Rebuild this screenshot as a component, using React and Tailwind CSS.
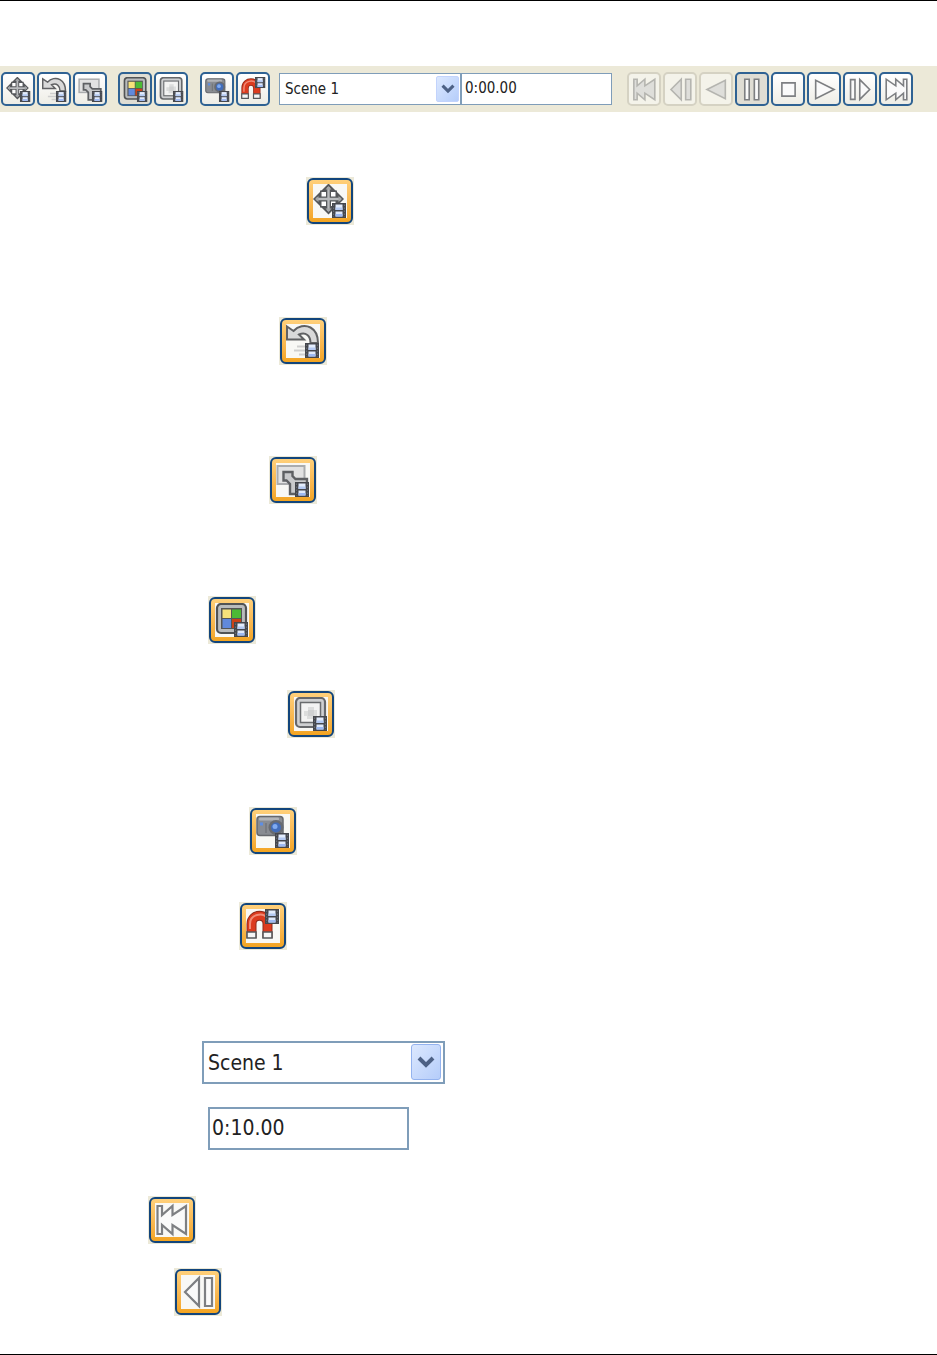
import { useState } from 'react';
import clsx from 'clsx';

const Film = ({ x = 19, y = 19 }) => (
  <g transform={`translate(${x} ${y})`}>
    <rect width="14" height="15" fill="#45474d" />
    <path d="M1.6 1.5 V14 M12.4 1.5 V14" stroke="#6d7077" strokeWidth="1" strokeDasharray="1.5 1.5" />
    <rect x="3.5" y="1.5" width="7" height="5.5" fill="#e3ecfc" />
    <rect x="3.5" y="4.5" width="7" height="2.5" fill="#b4c9f2" />
    <rect x="3.5" y="8.5" width="7" height="5" fill="#dfe9fb" />
    <rect x="3.5" y="11" width="7" height="2.5" fill="#9db9f3" />
  </g>
);

const MoveIcon = () => (
  <>
    <path d="M15.5 -.5 L31 15 L15.5 30.5 L0 15Z" fill="#55575a" />
    <path d="M7 6.5 H24 V23.5 H7Z" fill="#55575a" />
    <path d="M15.5 3 V27 M3 15 H28" stroke="#b9bbbd" strokeWidth="2.4" />
    <path d="M15.5 2 L18.5 5.5 H12.5Z M15.5 28 L18.5 24.5 H12.5Z M2 15 L5.5 12 V18Z M29 15 L25.5 12 V18Z" fill="#a4a6a8" />
    <path d="M8.5 8 H13 V12.5 H8.5Z M18 8 H22.5 V12.5 H18Z M8.5 17.5 H13 V22 H8.5Z M18 17.5 H22.5 V22 H18Z" fill="#fff" />
    <Film />
  </>
);

const UndoIcon = () => (
  <>
    <path
      d="M1 2.5 L7.5 7 C12 2 19 .5 24.5 3.5 C30 6.5 32 12.5 32 19 H24.5 C24.5 12 20 7.5 13 10.5 L18 15.5 H1Z"
      fill="#d9d9d9"
      stroke="#606163"
      strokeWidth="2"
    />
    <path d="M11 22.5 H19 M8 26.5 H19 M13 30.5 H19" stroke="#cfcfcf" strokeWidth="2" />
    <Film />
  </>
);

const ResizeIcon = () => (
  <>
    <rect x="1.5" y="3" width="27" height="18" fill="#e2e2e2" stroke="#aaacae" strokeWidth="2" />
    <path
      d="M7.5 9 H16.5 V13 L19.5 16 H31 V31 H14 V21 L10.5 17.5 H7.5Z"
      fill="#c9cacc"
      stroke="#5e6063"
      strokeWidth="2.4"
    />
    <Film />
  </>
);

const ColorsIcon = () => (
  <>
    <rect x="2" y="1" width="29" height="29" rx="4" fill="#b9bbbd" stroke="#515355" strokeWidth="2.2" />
    <rect x="6" y="5" width="21" height="21" fill="#555" />
    <rect x="7.5" y="6.5" width="8.5" height="8.5" fill="#f7e27a" />
    <rect x="17" y="6.5" width="9" height="8.5" fill="#4dba35" />
    <rect x="7.5" y="16" width="8.5" height="9" fill="#6189dc" />
    <rect x="17" y="16" width="9" height="9" fill="#cc4218" />
    <Film />
  </>
);

const FrameIcon = () => (
  <>
    <rect x="2" y="1" width="29" height="29" rx="4" fill="#cfd0d2" stroke="#66686b" strokeWidth="2.2" />
    <rect x="6.5" y="5.5" width="20" height="20" fill="#f3f3f3" stroke="#696b6e" strokeWidth="1.5" />
    <path d="M14 10 H20 V13 H23 V19 H20 V22 H13 V19 H10 V14 H14Z" fill="#dcdddd" />
    <path d="M14 13 H20 V19 H14Z" fill="#cfd0d1" />
    <Film />
  </>
);

const CameraIcon = () => (
  <>
    <rect x="1" y="2.5" width="26" height="19" rx="3" fill="#898c92" stroke="#66686d" strokeWidth="1.5" />
    <rect x="3" y="3.5" width="20" height="3" rx="1" fill="#b2b4b8" />
    <rect x="4" y="8.5" width="3" height="3" fill="#5d8ee4" />
    <path d="M10 9 V19" stroke="#73767b" strokeWidth="1.5" />
    <circle cx="20" cy="13.5" r="7.5" fill="#686b71" />
    <circle cx="20" cy="13.5" r="5" fill="#426dba" />
    <circle cx="19" cy="12.5" r="2.5" fill="#80abf0" />
    <Film />
  </>
);

const MagnetIcon = () => (
  <>
    <path d="M5.5 29 V15 C5.5 4 21.5 4 21.5 15 V29" fill="none" stroke="#8e2b1b" strokeWidth="10" />
    <path d="M5.5 23 V15 C5.5 4 21.5 4 21.5 15 V23" fill="none" stroke="#dc3b1e" strokeWidth="8" />
    <path d="M4 20 V15 C4 5 17 3 21 9" fill="none" stroke="#f18b76" strokeWidth="2" />
    <path d="M1 23 H10 V29 H1Z M17 23 H26 V29 H17Z" fill="#f5f5f5" stroke="#56585b" strokeWidth="1.6" />
    <Film y={0} />
  </>
);

// outlines of the transport buttons
const SHAPES = {
  first: 'M2.5 3 H7 V12 L17.5 3 V12 L31 3 V31 L17.5 22 V31 L7 22 V31 H2.5Z',
  stepBack: 'M4 17 L18 3 V31Z M24 3 H31 V31 H24Z',
  back: 'M4 17 L29 4.5 V29.5Z',
  pause: 'M6.5 3 H12.5 V31 H6.5Z M19.5 3 H25.5 V31 H19.5Z',
  stop: 'M8 8 H26 V26 H8Z',
  play: 'M30 17 L5 4.5 V29.5Z',
  stepForward: 'M3.5 3.5 H9.5 V30.5 H3.5Z M29.5 17 L16 3.5 V30.5Z',
  last: 'M31 3 H26.5 V12 L16 3 V12 L3 3 V31 L16 22 V31 L26.5 22 V31 H31Z',
};

const Transport = ({ shape, disabled }) => (
  <path
    d={SHAPES[shape]}
    fill={disabled ? '#dededa' : '#fafafa'}
    stroke={disabled ? '#b5b5b0' : '#7d7f82'}
    strokeWidth="2.2"
  />
);

const Icon = ({ large, children }) => (
  <svg viewBox="0 0 34 34" className={large ? 'size-[34px]' : 'size-[25px]'} aria-hidden="true">
    {children}
  </svg>
);

const ToolButton = ({ label, pressed, disabled, children }) => (
  <button
    type="button"
    aria-label={label}
    disabled={disabled}
    className={clsx(
      'flex size-[34px] shrink-0 items-center justify-center rounded-[5px] border-2',
      disabled && 'border-[#d5d2c3] bg-[#f4f3ea]',
      !disabled && 'border-[#2f6293]',
      !disabled && (pressed ? 'bg-[#dfddd4]' : 'bg-linear-to-b from-white to-[#eeede6]')
    )}
  >
    <Icon>{children}</Icon>
  </button>
);

const HotButton = ({ label, children }) => (
  <span className="flex size-12 items-center justify-center bg-[#ece9d8]">
    <button
      type="button"
      aria-label={label}
      className="flex size-[46px] items-center justify-center rounded-md border-2 border-[#12457c] bg-linear-to-b from-[#ffd07a] to-[#f3a41f]"
    >
      <span className="flex size-[34px] items-center justify-center bg-[#f8f8f5]">
        <Icon large>{children}</Icon>
      </span>
    </button>
  </span>
);

const SceneSelect = ({ large }) => (
  <div className={clsx('relative', large ? 'h-[43px] w-[243px]' : 'h-8 w-[182px]')}>
    <select
      aria-label="Scene"
      className={clsx(
        'size-full appearance-none rounded-none border-[#7f9db9] bg-white text-[#222]',
        large ? 'border-2 pt-[2px] pl-1 text-[21px]' : 'border pl-[5px] text-[15px]'
      )}
    >
      <option>Scene 1</option>
    </select>
    <span
      className={clsx(
        'pointer-events-none absolute flex items-center justify-center border bg-linear-to-br from-[#dce8fe] to-[#b5cdfa]',
        large
          ? 'top-[3px] right-1 h-9 w-[30px] rounded-[3px] border-[#94b3ef]'
          : 'top-[3px] right-[2px] h-[26px] w-[23px] rounded-xs border-[#c2d3fc]'
      )}
    >
      <svg viewBox="0 0 18 12" className={large ? 'w-[18px]' : 'w-[14px]'} aria-hidden="true">
        <path d="M2 2 L9 9 L16 2" fill="none" stroke="#4d6185" strokeWidth="4" />
      </svg>
    </span>
  </div>
);

const TimeInput = ({ initial, large }) => {
  const [time, setTime] = useState(initial);
  return (
    <input
      type="text"
      aria-label="Time"
      value={time}
      onChange={(e) => setTime(e.target.value)}
      className={clsx(
        'border-[#7f9db9] bg-white text-[#222]',
        large ? 'h-[43px] w-[201px] border-2 px-[2px] pb-[2px] text-[21px]' : 'h-8 w-[151px] border px-[3px] pb-[2px] text-[15px]'
      )}
    />
  );
};

const Toolbar = () => (
  <div role="toolbar" className="mt-[65px] flex h-[46px] items-center overflow-hidden bg-[#ece9d8] pl-px">
    <div className="flex gap-[2px]">
      <ToolButton label="Move"><MoveIcon /></ToolButton>
      <ToolButton label="Rotate"><UndoIcon /></ToolButton>
      <ToolButton label="Resize"><ResizeIcon /></ToolButton>
    </div>
    <div className="ml-[11px] flex gap-[2px]">
      <ToolButton label="Colors" pressed><ColorsIcon /></ToolButton>
      <ToolButton label="Frame"><FrameIcon /></ToolButton>
    </div>
    <div className="ml-3 flex gap-[2px]">
      <ToolButton label="Camera"><CameraIcon /></ToolButton>
      <ToolButton label="Magnet"><MagnetIcon /></ToolButton>
    </div>
    <div className="ml-[9px] flex">
      <SceneSelect />
      <TimeInput initial="0:00.00" />
    </div>
    <div className="ml-[15px] flex gap-[2px]">
      <ToolButton label="First" disabled><Transport shape="first" disabled /></ToolButton>
      <ToolButton label="Step back" disabled><Transport shape="stepBack" disabled /></ToolButton>
      <ToolButton label="Play backwards" disabled><Transport shape="back" disabled /></ToolButton>
      <ToolButton label="Pause" pressed><Transport shape="pause" /></ToolButton>
      <ToolButton label="Stop"><Transport shape="stop" /></ToolButton>
      <ToolButton label="Play"><Transport shape="play" /></ToolButton>
      <ToolButton label="Step forward"><Transport shape="stepForward" /></ToolButton>
      <ToolButton label="Last"><Transport shape="last" /></ToolButton>
    </div>
  </div>
);

export default function App() {
  return (
    <main className="border-y border-black bg-white pb-[38px] font-['DejaVu_Sans_Condensed','DejaVu_Sans',sans-serif]">
      <Toolbar />
      <div className="flex flex-col items-start">
        <div className="mt-[65px] ml-[306px]">
          <HotButton label="Move"><MoveIcon /></HotButton>
        </div>
        <div className="mt-[92px] ml-[279px]">
          <HotButton label="Rotate"><UndoIcon /></HotButton>
        </div>
        <div className="mt-[91px] ml-[269px]">
          <HotButton label="Resize"><ResizeIcon /></HotButton>
        </div>
        <div className="mt-[92px] ml-[208px]">
          <HotButton label="Colors"><ColorsIcon /></HotButton>
        </div>
        <div className="mt-[46px] ml-[287px]">
          <HotButton label="Frame"><FrameIcon /></HotButton>
        </div>
        <div className="mt-[69px] ml-[249px]">
          <HotButton label="Camera"><CameraIcon /></HotButton>
        </div>
        <div className="mt-[47px] ml-[239px]">
          <HotButton label="Magnet"><MagnetIcon /></HotButton>
        </div>
        <div className="mt-[91px] ml-[202px]">
          <SceneSelect large />
        </div>
        <div className="mt-[23px] ml-[208px] flex">
          <TimeInput initial="0:10.00" large />
        </div>
        <div className="mt-[46px] ml-[148px]">
          <HotButton label="First"><Transport shape="first" /></HotButton>
        </div>
        <div className="mt-6 ml-[174px]">
          <HotButton label="Step back"><Transport shape="stepBack" /></HotButton>
        </div>
      </div>
    </main>
  );
}
